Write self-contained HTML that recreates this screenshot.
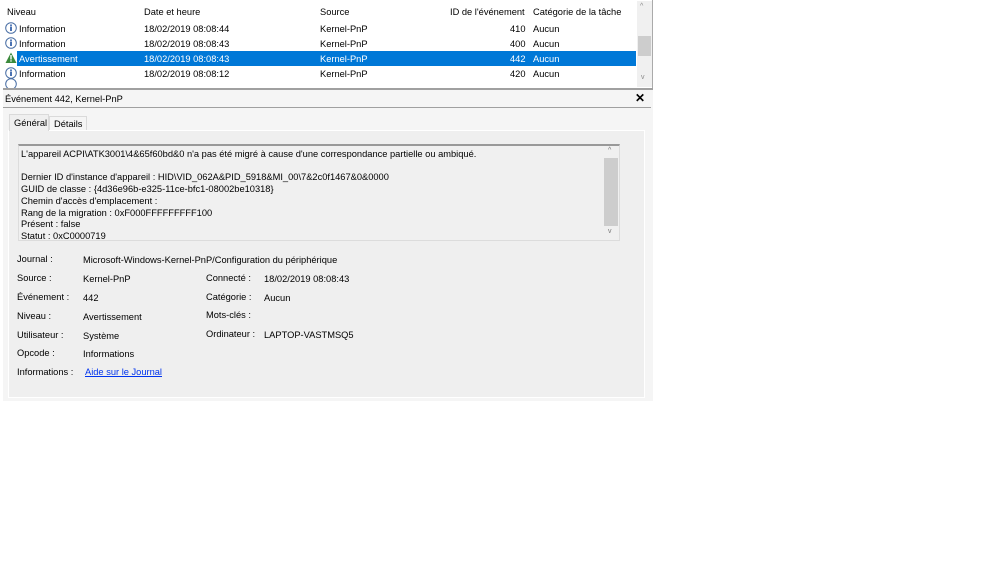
<!DOCTYPE html>
<html><head><meta charset="utf-8"><style>
*{margin:0;padding:0;box-sizing:border-box}
body{width:1000px;height:563px;background:#fff;font-family:"Liberation Sans",sans-serif;font-size:9.3px;color:#000;position:relative;overflow:hidden}
.a{position:absolute;white-space:nowrap}
.row{position:absolute;left:4px;width:632px;height:15px}
.sel{background:#0078d7;color:#fff}
</style></head><body>
<!-- top list -->
<div class="a" style="left:3px;top:0;width:650px;height:88px;border-right:1px solid #aaa;background:#fff;overflow:hidden">
<svg class="a" style="left:2px;top:77px" width="12" height="12"><circle cx="6" cy="7" r="5.3" fill="#fff" stroke="#4a6fa5"/></svg>
</div>
<div class="a" style="left:7px;top:7px">Niveau</div>
<div class="a" style="left:144px;top:7px">Date et heure</div>
<div class="a" style="left:320px;top:7px">Source</div>
<div class="a" style="left:450px;top:7px">ID de l'événement</div>
<div class="a" style="left:533px;top:7px">Catégorie de la tâche</div>
<!-- scrollbar -->
<div class="a" style="left:637px;top:1px;width:15px;height:86px;background:#f0f0f0"></div>
<div class="a" style="left:640px;top:3px;font-size:7px;color:#888">^</div>
<div class="a" style="left:638px;top:36px;width:13px;height:20px;background:#cdcdcd"></div>
<div class="a" style="left:641px;top:74px;font-size:7px;color:#888">v</div>
<!-- rows -->
<div class="row sel" style="top:51px;left:17px;width:619px"></div>
<svg class="a" style="left:5px;top:22px" width="12" height="60" viewBox="0 0 12 60">
<g fill="#fff" stroke="#4a6fa5" stroke-width="1"><circle cx="6" cy="6" r="5.3"/><circle cx="6" cy="21" r="5.3"/><circle cx="6" cy="51" r="5.3"/></g>
<g fill="#1d4fa0"><rect x="5.2" y="4.5" width="1.6" height="4.5"/><rect x="5.2" y="2.5" width="1.6" height="1.4"/><rect x="5.2" y="19.5" width="1.6" height="4.5"/><rect x="5.2" y="17.5" width="1.6" height="1.4"/><rect x="5.2" y="49.5" width="1.6" height="4.5"/><rect x="5.2" y="47.5" width="1.6" height="1.4"/></g>
<path d="M6 30.5 L11.5 41 L0.5 41 Z" fill="#3c8a3c"/><rect x="5.3" y="33" width="1.4" height="4.5" fill="#fff"/><rect x="5.3" y="38.3" width="1.4" height="1.3" fill="#fff"/>
</svg>
<div class="a" style="left:19px;top:24px">Information</div>
<div class="a" style="left:19px;top:39px">Information</div>
<div class="a" style="left:19px;top:54px;color:#fff">Avertissement</div>
<div class="a" style="left:19px;top:69px">Information</div>
<div class="a" style="left:144px;top:24px">18/02/2019 08:08:44</div>
<div class="a" style="left:144px;top:39px">18/02/2019 08:08:43</div>
<div class="a" style="left:144px;top:54px;color:#fff">18/02/2019 08:08:43</div>
<div class="a" style="left:144px;top:69px">18/02/2019 08:08:12</div>
<div class="a" style="left:320px;top:24px">Kernel-PnP</div>
<div class="a" style="left:320px;top:39px">Kernel-PnP</div>
<div class="a" style="left:320px;top:54px;color:#fff">Kernel-PnP</div>
<div class="a" style="left:320px;top:69px">Kernel-PnP</div>
<div class="a" style="left:510px;top:24px">410</div>
<div class="a" style="left:510px;top:39px">400</div>
<div class="a" style="left:510px;top:54px;color:#fff">442</div>
<div class="a" style="left:510px;top:69px">420</div>
<div class="a" style="left:533px;top:24px">Aucun</div>
<div class="a" style="left:533px;top:39px">Aucun</div>
<div class="a" style="left:533px;top:54px;color:#fff">Aucun</div>
<div class="a" style="left:533px;top:69px">Aucun</div>
<!-- details pane -->
<div class="a" style="left:3px;top:88px;width:650px;height:313px;background:#f5f5f5;border-top:2px solid #a0a0a0"></div>
<div class="a" style="left:5px;top:94px">Événement 442, Kernel-PnP</div>
<div class="a" style="left:635px;top:91px;font-size:12px;font-weight:bold">✕</div>
<div class="a" style="left:3px;top:107px;width:648px;height:1px;background:#a0a0a0"></div>
<div class="a" style="left:8px;top:130px;width:637px;height:268px;background:#efefef;border:1px solid #fff"></div>
<div class="a" style="left:9px;top:114px;width:40px;height:17px;background:#efefef;border:1px solid #dadada;border-bottom:none"></div>
<div class="a" style="left:49px;top:116px;width:38px;height:14px;background:#f5f5f5;border:1px solid #dadada;border-bottom:none"></div>
<div class="a" style="left:14px;top:118px">Général</div>
<div class="a" style="left:54px;top:119px">Détails</div>
<!-- textbox -->
<div class="a" style="left:18px;top:144px;width:602px;height:97px;background:#f0f0f0;border:1px solid #dcdcdc;border-top:2px solid #999"></div>
<div class="a" style="left:604px;top:146px;width:14px;height:94px;background:#f0f0f0"></div>
<div class="a" style="left:604px;top:158px;width:14px;height:68px;background:#cdcdcd"></div>
<div class="a" style="left:608px;top:147px;font-size:7px;color:#777">^</div>
<div class="a" style="left:608px;top:228px;font-size:7px;color:#777">v</div>
<div class="a" style="left:21px;top:149px;line-height:11.7px">L'appareil ACPI\ATK3001\4&amp;65f60bd&amp;0 n'a pas été migré à cause d'une correspondance partielle ou ambiqué.<br><br>Dernier ID d'instance d'appareil : HID\VID_062A&amp;PID_5918&amp;MI_00\7&amp;2c0f1467&amp;0&amp;0000<br>GUID de classe : {4d36e96b-e325-11ce-bfc1-08002be10318}<br>Chemin d'accès d'emplacement :<br>Rang de la migration : 0xF000FFFFFFFFF100<br>Présent : false<br>Statut : 0xC0000719</div>
<!-- fields -->
<div class="a" style="left:17px;top:254px">Journal :</div>
<div class="a" style="left:83px;top:255px">Microsoft-Windows-Kernel-PnP/Configuration du périphérique</div>
<div class="a" style="left:17px;top:273px">Source :</div>
<div class="a" style="left:83px;top:274px">Kernel-PnP</div>
<div class="a" style="left:206px;top:273px">Connecté :</div>
<div class="a" style="left:264px;top:274px">18/02/2019 08:08:43</div>
<div class="a" style="left:17px;top:292px">Événement :</div>
<div class="a" style="left:83px;top:293px">442</div>
<div class="a" style="left:206px;top:292px">Catégorie :</div>
<div class="a" style="left:264px;top:293px">Aucun</div>
<div class="a" style="left:17px;top:311px">Niveau :</div>
<div class="a" style="left:83px;top:312px">Avertissement</div>
<div class="a" style="left:206px;top:310px">Mots-clés :</div>
<div class="a" style="left:17px;top:330px">Utilisateur :</div>
<div class="a" style="left:83px;top:331px">Système</div>
<div class="a" style="left:206px;top:329px">Ordinateur :</div>
<div class="a" style="left:264px;top:330px">LAPTOP-VASTMSQ5</div>
<div class="a" style="left:17px;top:348px">Opcode :</div>
<div class="a" style="left:83px;top:349px">Informations</div>
<div class="a" style="left:17px;top:367px">Informations :</div>
<div class="a" style="left:85px;top:367px;color:#0033ee;text-decoration:underline">Aide sur le Journal</div>
</body></html>
